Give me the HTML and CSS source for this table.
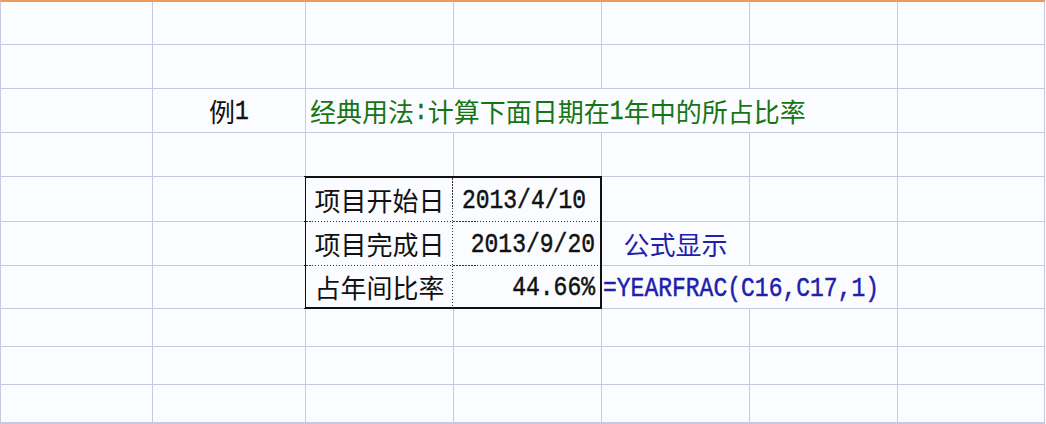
FILE: index.html
```html
<!DOCTYPE html>
<html lang="zh">
<head>
<meta charset="utf-8">
<title>YEARFRAC</title>
<link rel="stylesheet" href="styles.css">
</head>
<body>
<div class="sheet">
  <div class="c"></div><div class="c"></div><div class="c"></div><div class="c"></div><div class="c"></div><div class="c"></div><div class="c"></div>
  <div class="c"></div><div class="c"></div><div class="c"></div><div class="c"></div><div class="c"></div><div class="c"></div><div class="c"></div>

  <div class="c"></div>
  <div class="c center">例<span class="num">1</span></div>
  <div class="c span4 green">经典用法<span class="num">:</span>计算下面日期在<span class="num">1</span>年中的所占比率</div>
  <div class="c"></div>

  <div class="c"></div><div class="c"></div><div class="c"></div><div class="c"></div><div class="c"></div><div class="c"></div><div class="c"></div>

  <div class="box">
    <div class="t l r1">项目开始日</div>
    <div class="t r r1 center"><span class="num">2013/4/10</span></div>
    <div class="t l r2">项目完成日</div>
    <div class="t r r2 right"><span class="num">2013/9/20</span></div>
    <div class="t l r3">占年间比率</div>
    <div class="t r r3 right"><span class="num">44.66%</span></div>
  </div>

  <div class="c"></div><div class="c"></div><div class="c"></div><div class="c"></div><div class="c"></div>
  <div class="c"></div><div class="c"></div><div class="c center blue">公式显示</div><div class="c"></div><div class="c"></div>
  <div class="c"></div><div class="c"></div><div class="c span2 blue formula"><span class="num">=YEARFRAC(C16,C17,1)</span></div><div class="c"></div>

  <div class="c"></div><div class="c"></div><div class="c"></div><div class="c"></div><div class="c"></div><div class="c"></div><div class="c"></div>
  <div class="c"></div><div class="c"></div><div class="c"></div><div class="c"></div><div class="c"></div><div class="c"></div><div class="c"></div>
  <div class="c"></div><div class="c"></div><div class="c"></div><div class="c"></div><div class="c"></div><div class="c"></div><div class="c"></div>
</div>
</body>
</html>
```

FILE: styles.css
```css
html, body {
  margin: 0;
  padding: 0;
  background: #fbfcff;
}

.sheet {
  width: 1045px;
  height: 424px;
  box-sizing: border-box;
  border-top: 2px solid #ec9a5e;
  border-left: 1px solid #c6c9df;
  display: grid;
  grid-template-columns: 151px 152px 147px 147px 147px 147px 146px;
  grid-template-rows: 42px 43px 43px 43px 44px 43px 42px 37px 37px 37px;
  gap: 1px;
  background: #c6c9df;
  padding-bottom: 1px;
  font-family: "Noto Sans CJK SC", "Noto Sans CJK JP", sans-serif;
  font-size: 26px;
  color: #111;
}

.c {
  background: #fbfcff;
  display: flex;
  align-items: center;
  white-space: nowrap;
  overflow: visible;
}

.center { justify-content: center; }
.right { justify-content: flex-end; }

.span4 { grid-column: span 4; padding-left: 4px; }
.span2 { grid-column: span 2; padding-left: 1px; }

.green { color: #157515; }
.blue { color: #2020aa; }

.num {
  display: inline-block;
  font-family: "Liberation Mono", monospace;
  font-size: 23px;
  line-height: 1;
  transform: translateY(2px) scaleY(1.22);
  -webkit-text-stroke: 0.4px currentColor;
}

.box {
  grid-column: 3 / span 2;
  grid-row: 5 / span 3;
  margin: -1px -1px -1px -2px;
  border: 2px solid #111;
  background: #fbfcff;
  display: grid;
  grid-template-columns: 147px 146px;
  grid-template-rows: 44px 44px 1fr;
}

.t {
  display: flex;
  align-items: center;
  white-space: nowrap;
  background-repeat: no-repeat;
}

.t.l {
  justify-content: center;
  background-image: repeating-linear-gradient(to bottom, #333 0 1.5px, transparent 1.5px 3px);
  background-size: 1px 100%;
  background-position: right top;
}

.t.r { padding-right: 4px; }

.t.r.r1, .t.r.r2 {
  background-image: repeating-linear-gradient(to right, #333 0 1.5px, transparent 1.5px 3px);
  background-size: 100% 1px;
  background-position: left bottom;
}

.t.l.r1, .t.l.r2 {
  background-image:
    repeating-linear-gradient(to bottom, #333 0 1.5px, transparent 1.5px 3px),
    repeating-linear-gradient(to right, #333 0 1.5px, transparent 1.5px 3px);
  background-size: 1px 100%, 100% 1px;
  background-position: right top, left bottom;
}

.r1, .r2 { padding-bottom: 1px; box-sizing: border-box; }
```
